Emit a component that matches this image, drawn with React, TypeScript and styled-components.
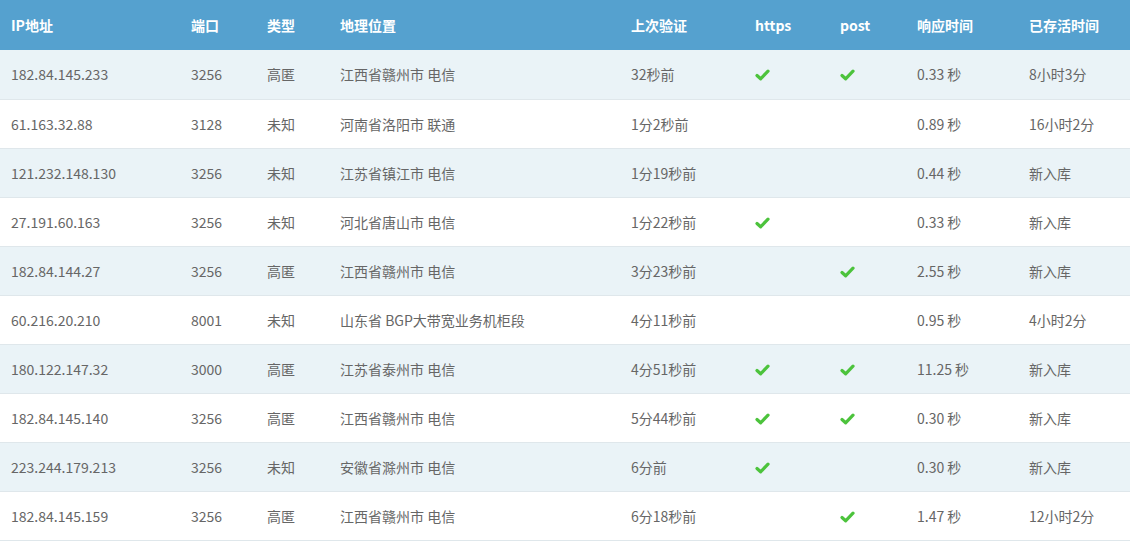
import React from "react";
import styled, { createGlobalStyle } from "styled-components";

const Global = createGlobalStyle`
  html, body { margin: 0; padding: 0; background: #fff; }
  body { font-family: "Noto Sans CJK SC", "Noto Sans", sans-serif; }
`;

const Table = styled.table`
  width: 1130px;
  border-collapse: collapse;
  table-layout: fixed;
  font-size: 14px;
  color: #666;
`;

const Col = styled.col<{ $w: number }>`
  width: ${(p) => p.$w}px;
`;

const HeadRow = styled.tr`
  background: #55a1cf;
  height: 50px;
`;

const Th = styled.th`
  box-sizing: border-box;
  text-align: left;
  padding: 0 0 0 11px;
  color: #fff;
  font-weight: 700;
  font-size: 14px;
  white-space: nowrap;
`;

const Row = styled.tr<{ $striped: boolean }>`
  height: 49px;
  background: ${(p) => (p.$striped ? "#eaf3f7" : "#fff")};
  border-bottom: 1px solid #dfe7eb;
`;

const Td = styled.td`
  box-sizing: border-box;
  padding: 0 0 0 11px;
  white-space: nowrap;
  vertical-align: middle;
`;

const CheckIcon = styled.svg`
  display: block;
  width: 15px;
  height: 12px;
  margin-top: 2px;
`;

const Check = () => (
  <CheckIcon viewBox="0 0 15 12">
    <path
      d="M2 6.5 L5.6 9.8 L13 2.2"
      fill="none"
      stroke="#4cc33c"
      strokeWidth="3.2"
      strokeLinecap="round"
      strokeLinejoin="round"
    />
  </CheckIcon>
);

const cols: [string, number][] = [
  ["IP地址", 180],
  ["端口", 76],
  ["类型", 73],
  ["地理位置", 291],
  ["上次验证", 124],
  ["https", 85],
  ["post", 77],
  ["响应时间", 112],
  ["已存活时间", 112],
];

type R = [string, string, string, string, string, boolean, boolean, string, string];

const rows: R[] = [
  ["182.84.145.233", "3256", "高匿", "江西省赣州市 电信", "32秒前", true, true, "0.33 秒", "8小时3分"],
  ["61.163.32.88", "3128", "未知", "河南省洛阳市 联通", "1分2秒前", false, false, "0.89 秒", "16小时2分"],
  ["121.232.148.130", "3256", "未知", "江苏省镇江市 电信", "1分19秒前", false, false, "0.44 秒", "新入库"],
  ["27.191.60.163", "3256", "未知", "河北省唐山市 电信", "1分22秒前", true, false, "0.33 秒", "新入库"],
  ["182.84.144.27", "3256", "高匿", "江西省赣州市 电信", "3分23秒前", false, true, "2.55 秒", "新入库"],
  ["60.216.20.210", "8001", "未知", "山东省 BGP大带宽业务机柜段", "4分11秒前", false, false, "0.95 秒", "4小时2分"],
  ["180.122.147.32", "3000", "高匿", "江苏省泰州市 电信", "4分51秒前", true, true, "11.25 秒", "新入库"],
  ["182.84.145.140", "3256", "高匿", "江西省赣州市 电信", "5分44秒前", true, true, "0.30 秒", "新入库"],
  ["223.244.179.213", "3256", "未知", "安徽省滁州市 电信", "6分前", true, false, "0.30 秒", "新入库"],
  ["182.84.145.159", "3256", "高匿", "江西省赣州市 电信", "6分18秒前", false, true, "1.47 秒", "12小时2分"],
];

export default function App() {
  return (
    <>
      <Global />
      <Table>
        <colgroup>
          {cols.map(([t, w]) => (
            <Col key={t} $w={w} />
          ))}
        </colgroup>
        <thead>
          <HeadRow>
            {cols.map(([t]) => (
              <Th key={t}>{t}</Th>
            ))}
          </HeadRow>
        </thead>
        <tbody>
          {rows.map((r, i) => (
            <Row key={i} $striped={i % 2 === 0}>
              <Td>{r[0]}</Td>
              <Td>{r[1]}</Td>
              <Td>{r[2]}</Td>
              <Td>{r[3]}</Td>
              <Td>{r[4]}</Td>
              <Td>{r[5] ? <Check /> : null}</Td>
              <Td>{r[6] ? <Check /> : null}</Td>
              <Td>{r[7]}</Td>
              <Td>{r[8]}</Td>
            </Row>
          ))}
        </tbody>
      </Table>
    </>
  );
}
